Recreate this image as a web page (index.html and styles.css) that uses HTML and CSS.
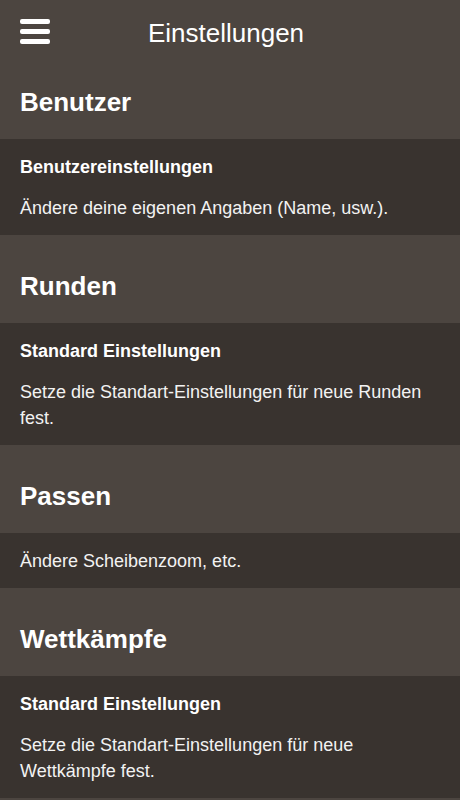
FILE: index.html
```html
<!DOCTYPE html>
<html lang="de">
<head>
<meta charset="utf-8">
<title>Einstellungen</title>
<link rel="stylesheet" href="styles.css">
</head>
<body>
<header class="topbar">
  <button class="menu-btn" aria-label="Menü">
    <span class="bar"></span><span class="bar"></span><span class="bar"></span>
  </button>
  <h1 class="title">Einstellungen</h1>
  <span class="spacer"></span>
</header>
<main class="list">
  <h2 class="section">Benutzer</h2>
  <div class="item">
    <div class="item-title">Benutzereinstellungen</div>
    <div class="item-desc">Ändere deine eigenen Angaben (Name, usw.).</div>
  </div>
  <h2 class="section">Runden</h2>
  <div class="item">
    <div class="item-title">Standard Einstellungen</div>
    <div class="item-desc">Setze die Standart-Einstellungen für neue Runden fest.</div>
  </div>
  <h2 class="section">Passen</h2>
  <div class="item">
    <div class="item-desc">Ändere Scheibenzoom, etc.</div>
  </div>
  <h2 class="section">Wettkämpfe</h2>
  <div class="item">
    <div class="item-title">Standard Einstellungen</div>
    <div class="item-desc">Setze die Standart-Einstellungen für neue Wettkämpfe fest.</div>
  </div>
</main>
</body>
</html>
```
FILE: styles.css
```css
html, body {
  margin: 0;
  padding: 0;
  background: #4c4540;
}
body {
  font-family: "Liberation Sans", Arial, sans-serif;
  color: #ffffff;
}
.topbar {
  display: grid;
  grid-template-columns: 62px 1fr 70px;
  align-items: start;
  height: 51px;
  background: #4c4540;
}
.menu-btn {
  display: flex;
  flex-direction: column;
  gap: 5px;
  margin: 19px 0 0 20px;
  padding: 0;
  width: 30px;
  border: 0;
  background: transparent;
}
.bar {
  display: block;
  width: 30px;
  height: 5px;
  border-radius: 2px;
  background: #ffffff;
}
.title {
  margin: 0;
  padding-top: 18px;
  font-size: 26px;
  line-height: 30px;
  font-weight: normal;
  text-align: center;
  color: #ffffff;
}
.list {
  display: flex;
  flex-direction: column;
}
.section {
  margin: 0;
  padding: 36px 20px 22px;
  font-size: 26px;
  line-height: 30px;
  font-weight: bold;
  background: #4c4540;
  color: #ffffff;
}
.item {
  display: flex;
  flex-direction: column;
  gap: 15px;
  padding: 15px 20px 14px;
  background: #39332f;
}
.item-title {
  font-size: 18px;
  line-height: 26px;
  font-weight: bold;
  color: #ffffff;
}
.item-desc {
  font-size: 18px;
  line-height: 26px;
  color: #f2f2f2;
}
```
